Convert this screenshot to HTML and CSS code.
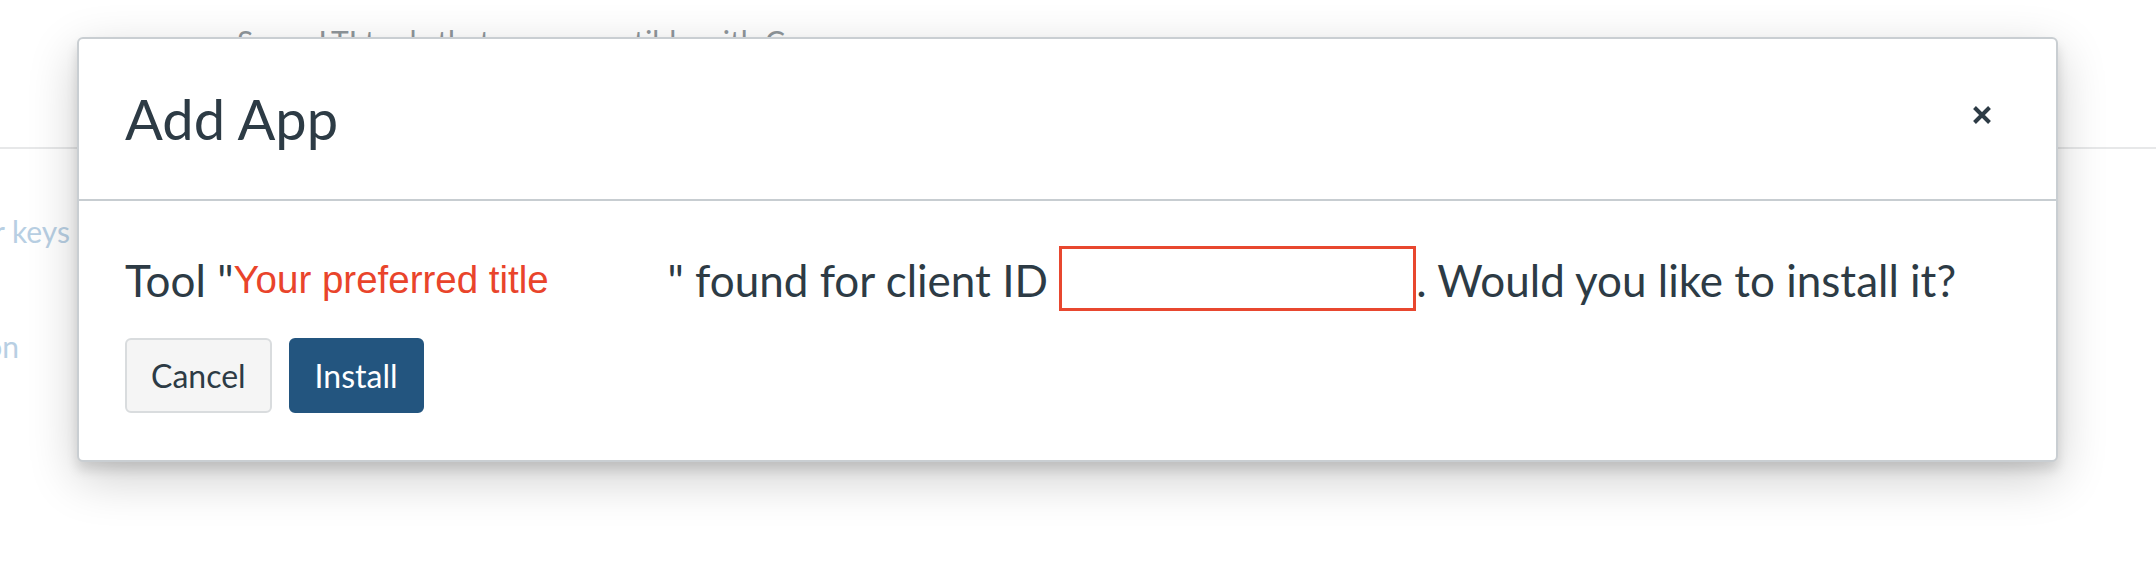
FILE: index.html
```html
<!DOCTYPE html>
<html lang="en">
<head>
<meta charset="utf-8">
<title>Add App</title>
<link rel="stylesheet" href="styles.css">
</head>
<body>
<div class="page">
  <div class="page-top">Some LTI tools that are compatible with Canvas</div>
  <div class="page-rule"></div>
  <div class="side">
    <div class="side-item">Developer keys</div>
    <div class="side-item side-item-2">Navigation</div>
  </div>
</div>

<div class="modal" role="dialog" aria-label="Add App">
  <div class="modal-header">
    <h2 class="modal-title">Add App</h2>
    <button class="modal-close" aria-label="Close">
      <svg width="20" height="20" viewBox="0 0 20 20"><path d="M2.5 2.5 L17.5 17.5 M17.5 2.5 L2.5 17.5" stroke="#2d3b45" stroke-width="4" fill="none"/></svg>
    </button>
  </div>
  <div class="modal-body">
    <p class="message">Tool "<span class="title-slot"><span class="title-note">Your preferred title</span></span>" found for client ID <span class="id-box"></span>. Would you like to install it?</p>
    <div class="actions">
      <button class="btn btn-cancel">Cancel</button>
      <button class="btn btn-primary">Install</button>
    </div>
  </div>
</div>
</body>
</html>
```

FILE: styles.css
```css
html, body {
  margin: 0;
  padding: 0;
}
body {
  width: 2156px;
  height: 584px;
  overflow: hidden;
  position: relative;
  background: #ffffff;
  font-family: Lato, "Noto Sans", sans-serif;
  color: #2d3b45;
}

.page {
  display: flex;
  flex-direction: column;
}
.page-top {
  padding-top: 23px;
  padding-left: 237px;
  font-size: 30px;
  line-height: 36px;
  color: #8f969b;
  white-space: nowrap;
}
.page-rule {
  margin-top: 88px;
  height: 2px;
  background: #e7e8e9;
}
.side {
  width: 70px;
  display: flex;
  flex-direction: column;
  align-items: flex-end;
  margin-top: 64px;
}
.side-item {
  font-size: 30px;
  line-height: 36px;
  color: #b8cfe3;
  white-space: nowrap;
}
.side-item-2 {
  margin-top: 79px;
  margin-right: 51px;
}

.modal {
  position: absolute;
  left: 77px;
  top: 37px;
  width: 1981px;
  height: 425px;
  box-sizing: border-box;
  background: #ffffff;
  border: 2px solid #c9ced2;
  border-radius: 6px;
  box-shadow: 0 8px 12px rgba(0, 0, 0, 0.12), 0 16px 50px rgba(0, 0, 0, 0.2);
  display: flex;
  flex-direction: column;
}
.modal-header {
  height: 162px;
  box-sizing: border-box;
  border-bottom: 2px solid #c7cdd1;
  display: flex;
  align-items: center;
  justify-content: space-between;
  padding: 0 64px 0 46px;
}
.modal-title {
  margin: 0;
  font-size: 56px;
  font-weight: 400;
  line-height: 1.2;
  color: #2d3b45;
}
.modal-close {
  border: 0;
  background: none;
  padding: 0;
  margin: 0 0 8px 0;
  width: 20px;
  height: 20px;
  display: block;
}
.modal-close svg {
  display: block;
}

.modal-body {
  padding: 45px 46px 0 46px;
}
.message {
  margin: 0;
  font-size: 44px;
  line-height: 1.2;
  white-space: nowrap;
}
.title-slot {
  display: inline-block;
  width: 434px;
}
.title-note {
  font-family: "Liberation Sans", Arial, sans-serif;
  font-size: 38.5px;
  color: #e9442b;
  vertical-align: 4px;
}
.id-box {
  display: inline-block;
  width: 357px;
  height: 65px;
  box-sizing: border-box;
  border: 3px solid #e8472f;
  vertical-align: -14px;
}

.actions {
  display: flex;
  gap: 17px;
  margin-top: 27px;
}
.btn {
  height: 75px;
  box-sizing: border-box;
  padding: 0 24px;
  border-radius: 6px;
  font-family: Lato, "Noto Sans", sans-serif;
  font-size: 32px;
  line-height: 1;
}
.btn-cancel {
  background: #f5f5f5;
  border: 2px solid #d9dcde;
  color: #2d3b45;
}
.btn-primary {
  background: #23557f;
  border: 2px solid #23557f;
  color: #ffffff;
}
```
